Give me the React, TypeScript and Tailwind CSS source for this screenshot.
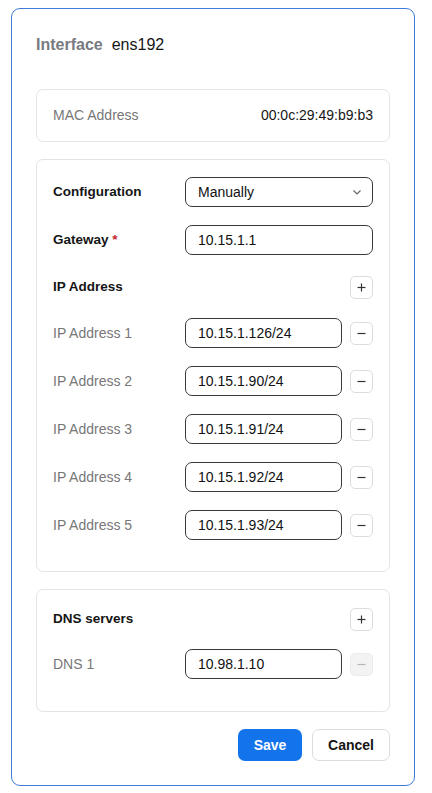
const ipAddresses = ['10.15.1.126/24', '10.15.1.90/24', '10.15.1.91/24', '10.15.1.92/24', '10.15.1.93/24'];

function SmallButton({ kind, disabled = false }: { kind: 'plus' | 'minus'; disabled?: boolean }) {
  return (
    <button
      className={`flex h-[23px] w-[23px] shrink-0 items-center justify-center rounded-[5px] border ${
        disabled ? 'border-[#ececec] bg-[#f3f3f3] text-[#b5b5b5]' : 'border-[#dcdcdc] bg-white text-[#333]'
      }`}
    >
      <svg width="11" height="11" viewBox="0 0 11 11" fill="none" stroke="currentColor" strokeWidth="1.2">
        <path d="M1.5 5.5h8" />
        {kind === 'plus' && <path d="M5.5 1.5v8" />}
      </svg>
    </button>
  );
}

function TextInput({ value, wide = false }: { value: string; wide?: boolean }) {
  return (
    <div
      className={`flex h-[30px] items-center rounded-[7px] border border-[#3a3a3a] bg-white px-3 text-[14px] text-[#111] ${
        wide ? 'w-[188px]' : 'w-[157px]'
      }`}
    >
      {value}
    </div>
  );
}

function FieldRow({ label, value, removable, disabled }: { label: string; value: string; removable?: boolean; disabled?: boolean }) {
  return (
    <div className="flex items-center">
      <span className="w-[132px] text-[14px] text-[#777]">{label}</span>
      <TextInput value={value} />
      {removable && (
        <div className="ml-2">
          <SmallButton kind="minus" disabled={disabled} />
        </div>
      )}
    </div>
  );
}

export default function App() {
  return (
    <div className="min-h-[793px] bg-white pl-[11px] pt-[8px]" style={{ fontFamily: '"Liberation Sans", Arial, sans-serif' }}>
      <div className="flex h-[778px] w-[404px] flex-col rounded-[9px] border border-[#3b7dd8] bg-white px-6 pt-[24px]">
        <div className="flex h-6 items-center gap-[9px]">
          <span className="text-[16px] font-bold text-[#777b80]">Interface</span>
          <span className="text-[16px] text-[#151515]">ens192</span>
        </div>

        <div className="mt-[32px] flex h-[53px] items-center justify-between rounded-[7px] border border-[#e4e4e4] px-4">
          <span className="text-[14px] text-[#777]">MAC Address</span>
          <span className="text-[14px] text-[#151515]">00:0c:29:49:b9:b3</span>
        </div>

        <div className="mt-[17px] flex h-[413px] flex-col rounded-[7px] border border-[#e4e4e4] px-4 pt-[17px]">
          <div className="flex items-center">
            <span className="w-[132px] text-[13.5px] font-bold text-[#151515]">Configuration</span>
            <div className="flex h-[30px] w-[188px] items-center justify-between rounded-[7px] border border-[#3a3a3a] pl-3 pr-[9px] text-[14px] text-[#111]">
              <span>Manually</span>
              <svg width="12" height="12" viewBox="0 0 12 12" fill="none" stroke="#666" strokeWidth="1.2">
                <path d="M2.5 4.5 6 8l3.5-3.5" />
              </svg>
            </div>
          </div>
          <div className="mt-[18px] flex items-center">
            <span className="w-[132px] text-[13.5px] font-bold text-[#151515]">
              Gateway <span className="text-[#c4262e]">*</span>
            </span>
            <TextInput value="10.15.1.1" wide />
          </div>
          <div className="mt-[21px] flex h-[23px] items-center justify-between">
            <span className="text-[13.5px] font-bold text-[#151515]">IP Address</span>
            <SmallButton kind="plus" />
          </div>
          <div className="mt-[19px] flex flex-col gap-[18px]">
            {ipAddresses.map((ip, i) => (
              <FieldRow key={ip} label={`IP Address ${i + 1}`} value={ip} removable />
            ))}
          </div>
        </div>

        <div className="mt-[17px] flex h-[123px] flex-col rounded-[7px] border border-[#e4e4e4] px-4 pt-[18px]">
          <div className="flex h-[23px] items-center justify-between">
            <span className="text-[13.5px] font-bold text-[#151515]">DNS servers</span>
            <SmallButton kind="plus" />
          </div>
          <div className="mt-[18px]">
            <FieldRow label="DNS 1" value="10.98.1.10" removable disabled />
          </div>
        </div>

        <div className="mt-[17px] flex justify-end gap-[10px]">
          <button className="h-[32px] w-[64px] rounded-[7px] bg-[#1273eb] text-[14px] font-bold text-white">Save</button>
          <button className="h-[32px] w-[78px] rounded-[7px] border border-[#dcdcdc] bg-white text-[14px] font-bold text-[#151515]">
            Cancel
          </button>
        </div>
      </div>
    </div>
  );
}
